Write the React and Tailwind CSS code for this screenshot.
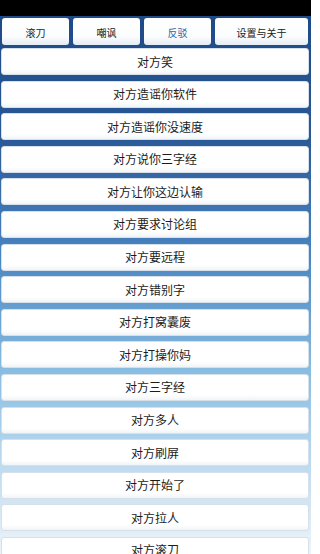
const tabs = ['滚刀', '嘲讽', '反驳', '设置与关于']

const items = [
  '对方笑',
  '对方造谣你软件',
  '对方造谣你没速度',
  '对方说你三字经',
  '对方让你这边认输',
  '对方要求讨论组',
  '对方要远程',
  '对方错别字',
  '对方打窝囊废',
  '对方打操你妈',
  '对方三字经',
  '对方多人',
  '对方刷屏',
  '对方开始了',
  '对方拉人',
  '对方滚刀',
]

export default function App() {
  const active = 2
  return (
    <div
      className="h-[554px] w-[311px] overflow-hidden"
      style={{ fontFamily: '"Noto Sans CJK SC", "Noto Sans", sans-serif' }}
    >
      <div className="h-[16px] bg-black" />
      <div className="h-[538px] bg-[linear-gradient(180deg,#1f4a88_0%,#2a5896_22%,#4a86c2_45%,#86bbe0_65%,#b9d8ee_82%,#eef4f9_100%)]">
        <div className="grid grid-cols-[67px_67px_67px_1fr] gap-[4px] pl-[2px] pr-[3px] pt-[2px]">
          {tabs.map((t, i) => (
            <div
              key={t}
              className={`flex h-[27px] items-center justify-center rounded-[3px] bg-[linear-gradient(180deg,#ffffff_0%,#fbfcfd_70%,#e3ebf3_100%)] pt-[2px] text-[10px] ${i === active ? 'text-[#2c62a8]' : 'text-[#222]'}`}
            >
              {t}
            </div>
          ))}
        </div>
        <div className="mt-[3px] flex flex-col gap-[5.6px] pl-[1px] pr-[2px]">
          {items.map((t) => (
            <div
              key={t}
              className="flex h-[27px] shrink-0 items-center justify-center rounded-[3px] border border-[#d6e0ea] bg-[linear-gradient(180deg,#ffffff_0%,#ffffff_80%,#f1f4f7_100%)] text-[12px] text-[#1c1c1c]"
            >
              {t}
            </div>
          ))}
        </div>
      </div>
    </div>
  )
}
